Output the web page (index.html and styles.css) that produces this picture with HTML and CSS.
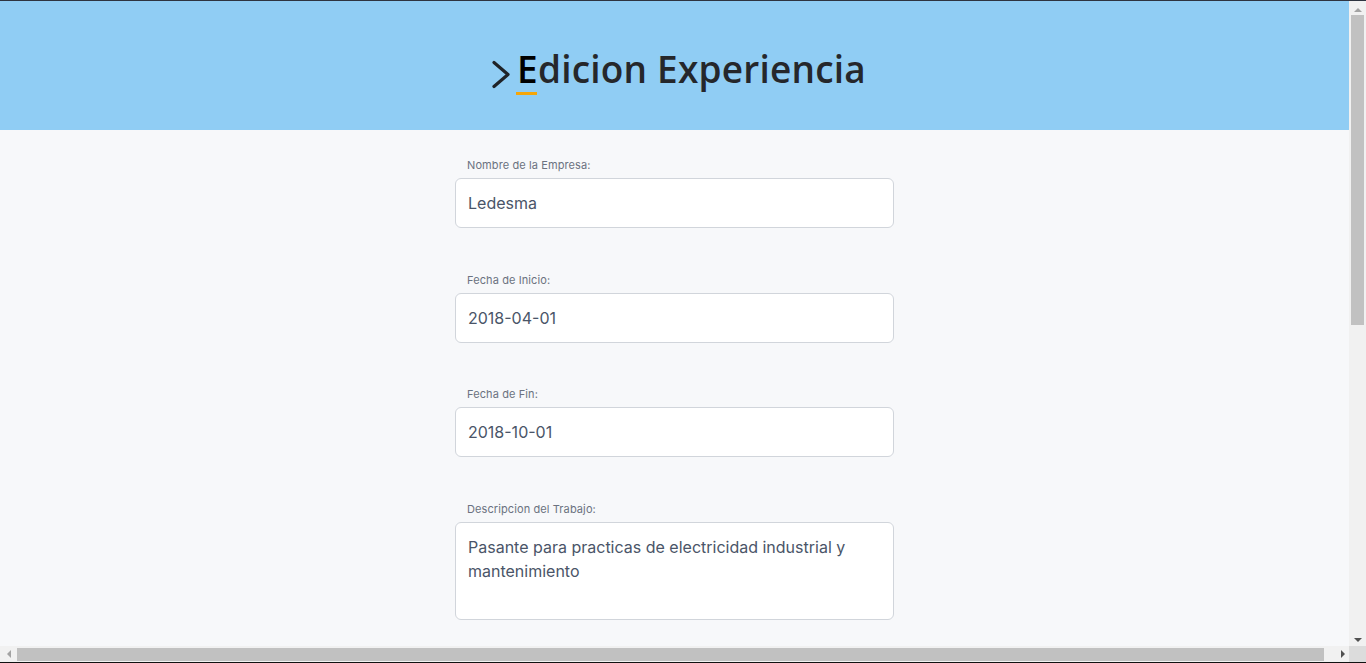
FILE: index.html
```html
<!DOCTYPE html>
<html lang="es">
<head>
<meta charset="utf-8">
<title>Edicion Experiencia</title>
<link rel="stylesheet" href="styles.css">
</head>
<body>
<div class="window">
  <div class="viewport">
    <header class="hero">
      <h1 class="title">
        <svg class="chevron" width="20" height="29" viewBox="0 0 20 29" aria-hidden="true">
          <path d="M3 2.5 L17 14.5 L3 26.5" fill="none" stroke="#1f2328" stroke-width="3.2" stroke-linecap="round" stroke-linejoin="round"/>
        </svg>
        <span class="first">E</span>dicion Experiencia
      </h1>
    </header>
    <main class="main">
      <form class="form">
        <div class="field">
          <label class="label">Nombre de la Empresa:</label>
          <input class="input" type="text" value="Ledesma">
        </div>
        <div class="field">
          <label class="label">Fecha de Inicio:</label>
          <input class="input" type="text" value="2018-04-01">
        </div>
        <div class="field">
          <label class="label">Fecha de Fin:</label>
          <input class="input" type="text" value="2018-10-01">
        </div>
        <div class="field">
          <label class="label">Descripcion del Trabajo:</label>
          <textarea class="input textarea">Pasante para practicas de electricidad industrial y mantenimiento</textarea>
        </div>
      </form>
    </main>
  </div>
  <div class="vbar">
    <span class="arrow arrow-up"></span>
    <div class="vtrack"><div class="vthumb"></div></div>
    <span class="arrow arrow-down"></span>
  </div>
  <div class="hbar">
    <span class="arrow arrow-left"></span>
    <div class="htrack"><div class="hthumb"></div></div>
    <span class="arrow arrow-right"></span>
  </div>
  <div class="corner"></div>
</div>
</body>
</html>
```
FILE: styles.css
```css
html, body {
  margin: 0;
  padding: 0;
  height: 100%;
  overflow: hidden;
}
body {
  background: #f7f8fa;
  font-family: "Inter", "Noto Sans", sans-serif;
}
.window {
  box-sizing: border-box;
  height: 100vh;
  border-top: 1px solid #2e3440;
  border-bottom: 1px solid #111;
  display: grid;
  grid-template-columns: 1fr 17px;
  grid-template-rows: 1fr 16px;
}
.viewport {
  overflow: hidden;
  min-width: 0;
  min-height: 0;
}
.hero {
  background: #90cdf4;
  height: 129px;
  display: flex;
  align-items: center;
  justify-content: center;
}
.title {
  margin: 0;
  display: flex;
  align-items: center;
  font-family: "Open Sans", "Noto Sans", sans-serif;
  font-weight: 600;
  font-size: 37px;
  letter-spacing: 0.2px;
  color: #25272b;
  padding-top: 5px;
  padding-left: 8px;
}
.chevron {
  margin-right: 6px;
  margin-top: 12px;
}
.first {
  color: #000;
  position: relative;
}
.first::after {
  content: "";
  position: absolute;
  left: -1px;
  width: 21px;
  bottom: -1px;
  height: 3px;
  background: #f6a609;
}
.main {
  padding-top: 27px;
}
.form {
  width: 439px;
  margin: 0 auto;
  display: flex;
  flex-direction: column;
  gap: 43.5px;
}
.field {
  display: flex;
  flex-direction: column;
}
.label {
  font-size: 11px;
  line-height: 16px;
  letter-spacing: 0.1px;
  color: #6b7280;
  padding-left: 12px;
  margin-bottom: 5px;
}
.input {
  box-sizing: border-box;
  height: 50px;
  width: 100%;
  border: 1px solid #d1d5db;
  border-radius: 6px;
  background: #fff;
  padding: 0 12px;
  font-family: "Inter", sans-serif;
  font-size: 16px;
  color: #4a5568;
  outline: none;
}
.textarea {
  height: 98px;
  padding: 12px 12px;
  line-height: 24px;
  resize: none;
  overflow: hidden;
}
/* fake browser scrollbars */
.vbar, .hbar {
  background: #f1f1f1;
  display: flex;
  align-items: center;
}
.vbar {
  flex-direction: column;
}
.vtrack {
  flex: 1;
  width: 100%;
  display: flex;
  justify-content: center;
}
.vthumb {
  width: 13px;
  height: 310px;
  background: #c1c1c1;
}
.htrack {
  flex: 1;
  height: 100%;
  display: flex;
  align-items: center;
}
.hthumb {
  height: 13px;
  width: 1307px;
  background: #c1c1c1;
}
.arrow {
  width: 17px;
  height: 14px;
  flex: none;
  position: relative;
}
.hbar .arrow {
  width: 17px;
  height: 16px;
}
.arrow::before {
  content: "";
  position: absolute;
  width: 0;
  height: 0;
  border: 4px solid transparent;
}
.arrow-up::before {
  left: 4.5px;
  top: 3px;
  border-bottom: 4px solid #a3a3a3;
}
.arrow-down::before {
  left: 4.5px;
  top: 6px;
  border-top: 4px solid #505050;
}
.arrow-left::before {
  left: 3px;
  top: 4px;
  border-right: 4px solid #a3a3a3;
}
.arrow-right::before {
  left: 9px;
  top: 4px;
  border-left: 4px solid #505050;
}
.corner {
  background: #dcdcdc;
}
```
